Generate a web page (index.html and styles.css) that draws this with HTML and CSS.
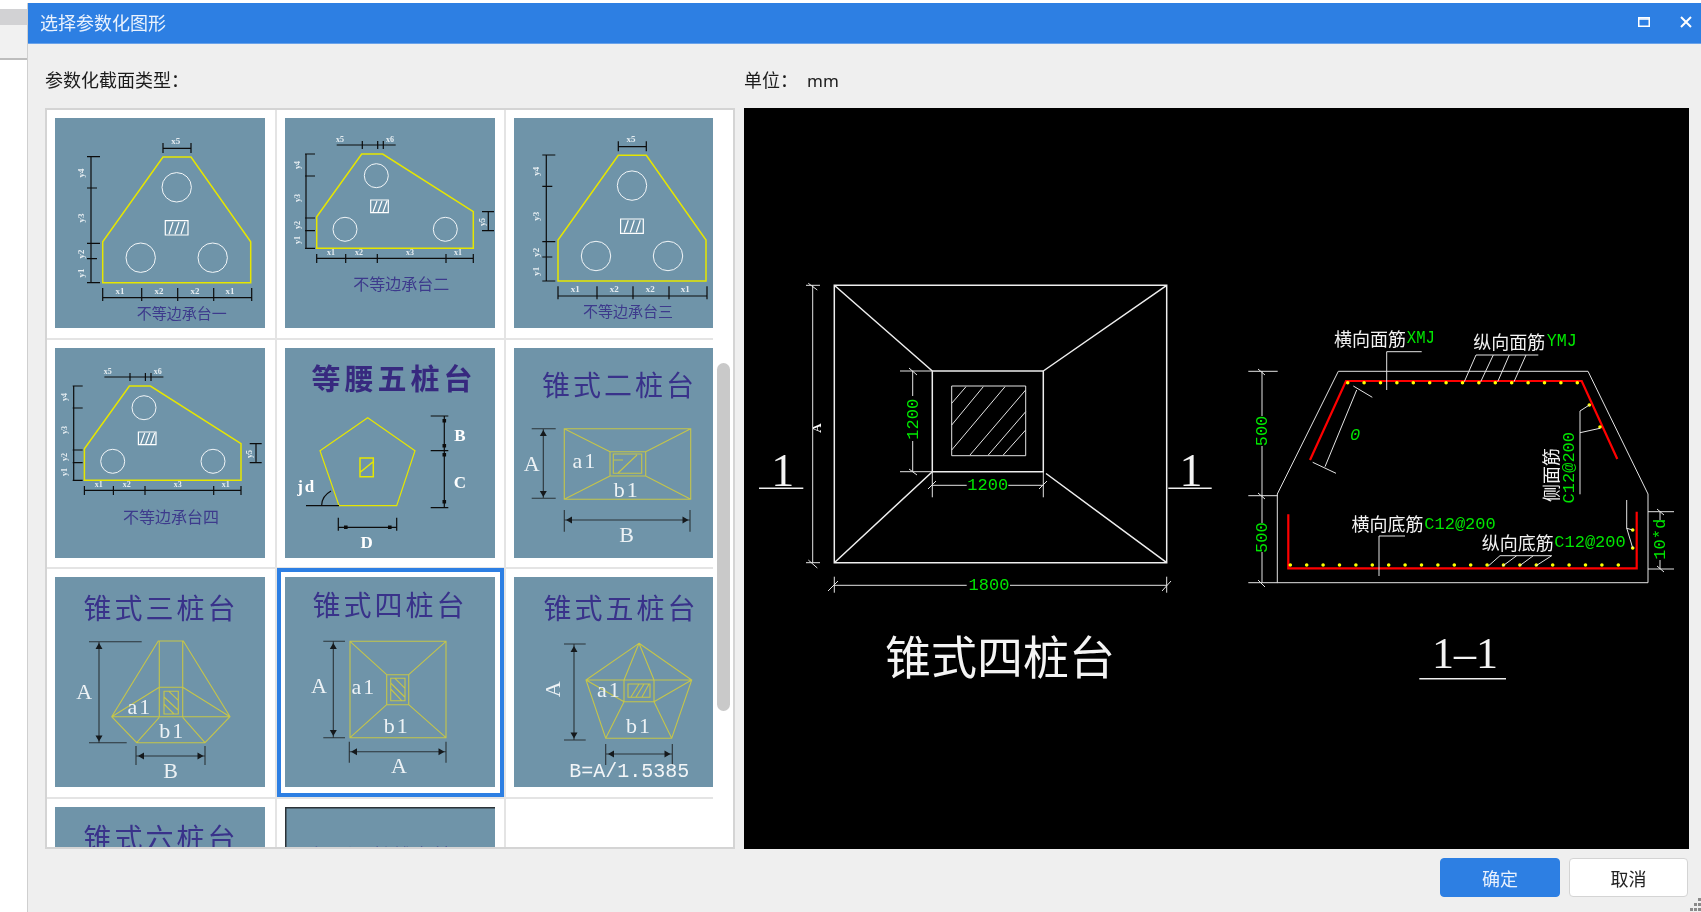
FILE: index.html
```html
<!DOCTYPE html>
<html lang="zh">
<head>
<meta charset="utf-8">
<title>选择参数化图形</title>
<link rel="stylesheet" href="styles.css">
</head>
<body>
<div class="page">
  <aside class="strip"><div class="strip-a"></div><div class="strip-b"></div></aside>
  <section class="dialog">
    <header class="titlebar">
      <span class="title">选择参数化图形</span>
      <span class="winbtns">
        <svg class="icon" viewBox="0 0 12 10" width="12" height="10"><path class="win" d="M.75 .75h10.5v8.5H.75z"/><path class="win" d="M.5 2h11"/></svg>
        <svg class="icon" viewBox="0 0 12 12" width="12" height="12"><path class="win2" d="M1 1l10 10M11 1L1 11"/></svg>
      </span>
    </header>
    <div class="labels">
      <span class="lab-left">参数化截面类型：</span>
      <span class="lab-right">单位：<span class="unit">mm</span></span>
    </div>
    <div class="main">
      <div class="list">
        <div class="grid">
          <div class="cell">
            <svg class="thumb" viewBox="0 0 210 210">
              <g id="tA">
                <path class="y" d="M108 39H136L195.7 123.7V164.7H47.7V123.7Z"/>
                <circle class="c" cx="121.7" cy="69.3" r="14.7"/><circle class="c" cx="85.7" cy="139.7" r="14.7"/><circle class="c" cx="157.7" cy="139.7" r="14.7"/>
                <path class="h" d="M110.3 102.7h22.7V117h-22.7zM114 116l4-12M120 116l4-12M126 116l4-12"/>
                <path class="k" d="M108 25v10M136 25v10M108 30.3h28M36 39v125.7M32 38.7h13M32 70h10M32 125.3h13M32 140.7h10M32 164.7h13M47.7 170v13M86.7 170v13M122.7 170v13M158.7 170v13M196.7 170v13M47.7 179.7h149"/>
                <text class="s" x="120.7" y="23">x5</text>
                <text class="s" x="65" y="173">x1</text><text class="s" x="104" y="173">x2</text><text class="s" x="140" y="173">x2</text><text class="s" x="175" y="173">x1</text>
                <text class="s" transform="rotate(-90 26 55)" x="26" y="55">y4</text>
                <text class="s" transform="rotate(-90 26 100)" x="26" y="100">y3</text>
                <text class="s" transform="rotate(-90 26 136)" x="26" y="136">y2</text>
                <text class="s" transform="rotate(-90 26 155)" x="26" y="155">y1</text>
              </g>
              <text class="cap" x="126.7" y="194">不等边承台一</text>
            </svg>
          </div>
          <div class="cell">
            <svg class="thumb" viewBox="0 0 210 210">
              <g id="tB">
                <path class="y" d="M76.7 36H97.7L188.3 93.7V130.3H31.7V98.7Z"/>
                <circle class="c" cx="91.3" cy="57.7" r="12"/><circle class="c" cx="60" cy="111.3" r="12"/><circle class="c" cx="160.3" cy="111.3" r="12"/>
                <path class="h" d="M85.7 82h17.6v12.7H85.7zM88 94l4-11M93 94l4-11M98 94l4-11"/>
                <path class="k" d="M51.7 27h59M77.3 23v8M92.7 23v8M98.3 23v8M21 36v94.3M20 36h10M20 58h10M20 100h10M20 112.7h10M20 130.3h10M31.7 136v9M60.7 136v9M92.3 136v9M161 136v9M188.3 136v9M31.7 140.3h156.6M203.3 93.7v19M197 93.7h12M197 112.7h12"/>
                <text class="xs" x="55" y="21">x5</text><text class="xs" x="105" y="21">x6</text>
                <text class="xs" x="46" y="134">x1</text><text class="xs" x="74" y="134">x2</text><text class="xs" x="125" y="134">x3</text><text class="xs" x="173" y="134">x1</text>
                <text class="xs" transform="rotate(-90 12 47)" x="12" y="47">y4</text>
                <text class="xs" transform="rotate(-90 12 80)" x="12" y="80">y3</text>
                <text class="xs" transform="rotate(-90 12 107)" x="12" y="107">y2</text>
                <text class="xs" transform="rotate(-90 12 122)" x="12" y="122">y1</text>
                <text class="xs" transform="rotate(-90 197 104)" x="197" y="104">y5</text>
              </g>
              <text class="cap cap-l" x="116.2" y="165">不等边承台二</text>
            </svg>
          </div>
          <div class="cell cell-last">
            <svg class="thumb" viewBox="0 0 210 210">
              <use href="#tA" transform="translate(-3.7 -1.7)"/>
              <text class="cap" x="114" y="192.5">不等边承台三</text>
            </svg>
          </div>

          <div class="cell">
            <svg class="thumb" viewBox="0 0 210 210">
              <use href="#tB" transform="translate(-2.3 2)"/>
              <text class="cap cap-l" x="116" y="168">不等边承台四</text>
            </svg>
          </div>
          <div class="cell">
            <svg class="thumb" viewBox="0 0 210 210">
              <text class="ttl ttl-b" x="109" y="29.3">等腰五桩台</text>
              <path class="y1" d="M82.7 69.7L130 102.7L111.7 157.7H54L35 102.7Z"/>
              <path class="y" d="M75 110h13.3v18.7H75zM75.5 124l12.3-10"/>
              <path class="k" d="M145.7 68h17.6M145.7 102.7h17.6M145.7 159.7h17.6M159.3 68v91.7M53.3 169.7v13M111.7 169.7v13M53.3 179.3h58.4M21 157.7h33M36.7 157Q37 148 46 143"/>
              <path class="fk" d="M157.5 71h3.6v3.6h-3.6zM157.5 96h3.6v3.6h-3.6zM157.5 105h3.6v3.6h-3.6zM157.5 152h3.6v3.6h-3.6zM59 177.5h3.6v3.6H59zM103 177.5h3.6v3.6H103z"/>
              <text class="l l-b" x="175" y="87">B</text><text class="l l-b" x="175" y="134.7">C</text><text class="l l-b" x="81.7" y="194.3">D</text><text class="l l-b l-sp" x="21.7" y="138.7">jd</text>
            </svg>
          </div>
          <div class="cell cell-last">
            <svg class="thumb" viewBox="0 0 210 210">
              <text class="ttl" x="105.5" y="36">锥式二桩台</text>
              <path class="o" d="M50.3 80.7H176.7V151.3H50.3ZM96 103.7h35.7V128H96ZM99.3 106h28.4v19.3H99.3ZM50.3 80.7L96 103.7M176.7 80.7L131.7 103.7M50.3 151.3L96 128M176.7 151.3L131.7 128M104 125l19-18M100 112h9"/>
              <path class="d" d="M17.7 80.7h24M17.7 150.3h24M29.3 80.7v69.6M50.3 162v21.7M176 162v21.7M50.3 172H176"/>
              <path class="ar" d="M29.3 82l-3.5 6h7ZM29.3 149l-3.5-6h7ZM52 172l6-3.5v7ZM174.5 172l-6-3.5v7Z"/>
              <text class="l" x="17.7" y="115.3">A</text><text class="l l-sp" x="71" y="112.7">a1</text><text class="l l-sp" x="112.7" y="141.3">b1</text><text class="l" x="112.7" y="186">B</text>
            </svg>
          </div>

          <div class="cell">
            <svg class="thumb" viewBox="0 0 210 210">
              <text class="ttl" x="106" y="30.3">锥式三桩台</text>
              <path class="o" d="M103.3 64H128.3L175 139.7L150 165.7H81.7L56.7 139.7ZM104.3 64V140.3M127.7 64V140.3M104.3 110.3h23.4M56.7 139.7H175M56.7 139.7L104.3 110.3M175 139.7L127.7 110.3M81.7 165.7L104.3 140.3M150 165.7L127.7 140.3M109 114.3h14.3V137H109ZM109 120l14 13M109 127l10 10M114 114.3l9.3 9"/>
              <path class="d" d="M34 64.7h52.7M34 165.7h37.7M44 64.7V165.7M81 169v19M150 169v19M81 179h69"/>
              <path class="ar" d="M44 66l-3.5 6h7ZM44 164.5l-3.5-6h7ZM83 179l6-3.5v7ZM148.5 179l-6-3.5v7Z"/>
              <text class="l" x="29.3" y="114.7">A</text><text class="l l-sp" x="85" y="129.7">a1</text><text class="l l-sp" x="117.3" y="153.7">b1</text><text class="l" x="115.7" y="193.7">B</text>
            </svg>
          </div>
          <div class="cell cell-sel">
            <svg class="thumb" viewBox="0 0 210 210">
              <text class="ttl" x="105" y="27">锥式四桩台</text>
              <path class="o" d="M65 64.3H161V160.7H65ZM101.7 97.7h22V127.7h-22ZM105.7 101.3H120V123.7H105.7ZM65 64.3L101.7 97.7M161 64.3L123.7 97.7M65 160.7L101.7 127.7M161 160.7L123.7 127.7M105.7 106l14 14M105.7 112l11 11.7M110 101.3l10 10"/>
              <path class="d" d="M38.3 64.3H60M38.3 160.7H60M48.3 64.3V160.7M64.3 164.7v21M161 164.7v21M64.3 174.7H161"/>
              <path class="ar" d="M48.3 66l-3.5 6h7ZM48.3 159l-3.5-6h7ZM66 174.7l6-3.5v7ZM159.5 174.7l-6-3.5v7Z"/>
              <text class="l" x="34" y="108">A</text><text class="l l-sp" x="79" y="109">a1</text><text class="l l-sp" x="111.7" y="148">b1</text><text class="l" x="114" y="188.7">A</text>
            </svg>
          </div>
          <div class="cell cell-last">
            <svg class="thumb" viewBox="0 0 210 210">
              <text class="ttl" x="107" y="30.3">锥式五桩台</text>
              <path class="o" d="M125 66.3L177.7 103L157.7 161.3H91.7L72 103ZM110 103h30v21.7h-30ZM114 107h22v13.3h-22ZM125 66.3L110 103M125 66.3L140 103M72 103H177.7M72 103L110 124.7M177.7 103L140 124.7M91.7 161.3L110 124.7M157.7 161.3L140 124.7M117 120l8-13M122 120l8-13M128 120l7-13"/>
              <path class="d" d="M50 67h21.7M50 163h21.7M60 67V163M91.7 167v21M158.3 167v21M91.7 177h66.6"/>
              <path class="ar" d="M60 69l-3.5 6h7ZM60 161.5l-3.5-6h7ZM94 177l6-3.5v7ZM156.5 177l-6-3.5v7Z"/>
              <text class="l" transform="rotate(-90 38.3 112.3)" x="38.3" y="112.3">A</text><text class="l l-sp" x="95.3" y="112.3">a1</text><text class="l l-sp" x="125" y="148">b1</text>
              <text class="m" x="115.3" y="194.3">B=A/1.5385</text>
            </svg>
          </div>

          <div class="cell">
            <svg class="thumb" viewBox="0 0 210 210">
              <text class="ttl" x="106" y="30.3">锥式六桩台</text>
            </svg>
          </div>
          <div class="cell">
            <svg class="thumb" viewBox="0 0 210 210">
              <path class="edge" d="M.75 210V.75H210"/>
              <text class="ttl2" x="108" y="48">矩形四棱锥台桩承</text>
            </svg>
          </div>
          <div class="cell cell-last cell-empty"></div>
        </div>
        <div class="scroll"></div>
      </div>
      <div class="canvas">
        <svg class="draw" viewBox="744 108 945 741">
          <path class="w" d="M834.3 285.3H1166.7V562.7H834.3ZM932.3 371H1043.3V471.7H932.3ZM834.3 285.3L932.3 371M1166.7 285.3L1043.3 371M834.3 562.7L932.3 471.7M1166.7 562.7L1046 473.5"/>
          <path class="w1" d="M951.7 386H1025.7V455.7H951.7ZM951.7 403.3L966 386.7M951.7 425L983.3 386.7M951.7 450L1005 386.7M970 455L1025.7 390M988.3 455L1025.7 411.7M1003.3 455L1025.7 430"/>
          <path class="w1" d="M812.7 285.3V562.7M806 285.3H820M806 562.7H820M808.3 283.3l9 6.7M808.3 560l9 8M900 371H932.3M900 471.7H932.3M912.7 371V396M912.7 441V471.7M909 368l8 7M909 469l8 6M932.3 471.7V497.3M1043.3 471.7V497.3M932.3 485.3H966.7M1008.3 485.3H1043.3M928 489l8-8M1039 489l8-8M834.3 576.7V592.7M1166.7 576.7V592.7M834.3 585.3H966.7M1010 585.3H1166.7M828 591l10-10M1162 591l9-10"/>
          <text class="a" transform="rotate(-90 816 428)" x="816" y="428">A</text>
          <text class="g" transform="rotate(-90 913.3 419.3)" x="913.3" y="419.3">1200</text>
          <text class="g" x="987.7" y="485.3">1200</text>
          <text class="g" x="989" y="585.3">1800</text>
          <text class="big1" x="782.7" y="470">1</text><text class="big1" x="1191" y="470">1</text>
          <path class="w" d="M759 488.3H803.3M1168.3 488.3H1211.7M1419.3 678.7H1506"/>
          <text class="big" x="1000" y="654">锥式四桩台</text>

          <path class="w1" d="M1338.3 371.3H1588L1648 494V582.7H1277.3V494Z"/>
          <path class="red" d="M1310 460L1346 381H1581.7L1617.3 459M1288.3 514.3V568.3H1636.7V511.7"/>
          <path class="dots" d="M1347.7 382.7H1578M1290.3 565H1634"/>
          <path class="dots2" d="M1589.3 405h.01M1600 427h.01M1632.7 530h.01M1632.7 548h.01"/>
          <path class="w1" d="M1421.7 351.7H1386.7V390M1476 355H1538.3M1476 355L1464.3 381.7M1493.3 355L1480.7 381.7M1509.3 355L1497.7 381.7M1526 355L1514 381.7M1248.3 371.3H1277.7M1248.3 495.7H1277.7M1248.3 582.7H1277.7M1262 371.3V416M1262 446V523M1262 552V582.7M1258 369l7 6M1258 493l7 6M1258 580l7 7M1356.7 390L1325 466.7M1353.3 386L1372.3 397.3M1312.7 462.3L1336 473.3M1589.3 405L1580 411V494.3M1580 432.7L1600 428.3M1405 536H1379V576M1500 555.7H1551.7M1500 555.7L1488.3 566M1516.7 555.7L1502.7 566M1533.3 555.7L1519.3 566M1551.7 555.7L1535.7 566M1626.7 500V528.3L1632.7 530M1626.7 528L1632.7 548M1648 511.7H1674M1648 569H1674M1660 511.7V520M1660 560V569M1657 509l7 6M1657 566l7 6"/>
          <text class="zh" x="1370" y="338">横向面筋</text>
          <text class="g g-n" x="1420.8" y="338" textLength="28" lengthAdjust="spacingAndGlyphs">XMJ</text>
          <text class="zh" x="1509.2" y="341">纵向面筋</text>
          <text class="g g-n" x="1561.7" y="341" textLength="30" lengthAdjust="spacingAndGlyphs">YMJ</text>
          <text class="g" transform="rotate(-90 1262.3 431)" x="1262.3" y="431">500</text>
          <text class="g" transform="rotate(-90 1262.3 537.7)" x="1262.3" y="537.7">500</text>
          <text class="g g-i" x="1355" y="435">0</text>
          <text class="zh" transform="rotate(-90 1550 475)" x="1550" y="475">侧面筋</text>
          <text class="g" transform="rotate(-90 1569.3 467.7)" x="1569.3" y="467.7">C12@200</text>
          <text class="zh" x="1387.5" y="523.3">横向底筋</text>
          <text class="g" x="1460" y="524">C12@200</text>
          <text class="zh" x="1517.8" y="541.7">纵向底筋</text>
          <text class="g" x="1590" y="542">C12@200</text>
          <text class="g" transform="rotate(-90 1660.7 539.3)" x="1660.7" y="539.3">10*d</text>
          <text class="big2" x="1465" y="653">1–1</text>
        </svg>
      </div>
    </div>
    <footer class="footer">
      <button class="btn btn-ok" type="button">确定</button>
      <button class="btn btn-no" type="button">取消</button>
    </footer>
    <svg class="grip" viewBox="0 0 12 14" width="12" height="14"><path class="gripdots" d="M9 0h3v3H9zM5 5h3v3H5zM9 5h3v3H9zM1 10h3v3H1zM5 10h3v3H5zM9 10h3v3H9z"/></svg>
  </section>
</div>
</body>
</html>
```
FILE: styles.css
```css
html, body { margin: 0; padding: 0; background: #fff; }
body { font-family: "Noto Sans CJK SC", "Noto Sans", sans-serif; overflow: hidden; }
.page { display: flex; width: 1701px; height: 912px; overflow: hidden; filter: blur(.35px); }
.strip { width: 27px; flex: none; padding-top: 9px; }
.strip-a { height: 16px; background: #d2d2d4; }
.strip-b { height: 33px; background: #f1f1f1; border-bottom: 2px solid #bdbdbd; }

.dialog { position: relative; flex: 1; margin-top: 3px; display: flex; flex-direction: column; background: #efefef; border-left: 1px solid #cfcfcf; min-width: 0; }
.titlebar { height: 41px; flex: none; box-sizing: border-box; display: flex; align-items: center; justify-content: space-between; padding: 0 9px 2px 12px; background: #2d7fe3; border-bottom: 1px solid #6aa3ea; color: #fff; }
.title { font-size: 18px; color: #eaf2fd; }
.winbtns { display: flex; align-items: center; gap: 30px; }
.icon { display: block; }
.win { fill: none; stroke: #fff; stroke-width: 1.5; }
.win2 { fill: none; stroke: #fff; stroke-width: 2; }

.labels { height: 64px; flex: none; box-sizing: border-box; padding: 22px 0 0 17px; display: flex; font-size: 18px; line-height: 26px; color: #1c1c1c; }
.lab-left { width: 699px; flex: none; }
.unit { font-family: "Noto Sans", sans-serif; font-size: 17px; margin-left: 9px; }

.main { display: flex; flex: none; height: 741px; padding-left: 17px; gap: 9px; }
.list { position: relative; box-sizing: border-box; width: 690px; height: 741px; flex: none; overflow: hidden; background: #fff; border: 2px solid #d4d4d4; }
.grid { display: grid; grid-template-columns: 229.5px 229.5px 206.5px; grid-auto-rows: 229.5px; }
.cell { position: relative; box-sizing: border-box; padding: 8px 0 0 8px; border-right: 2px solid #e4e4e4; border-bottom: 2px solid #e4e4e4; overflow: hidden; }
.cell-last { border-right: 0; }
.cell-empty { border-bottom: 0; }
.cell-sel { overflow: visible; }
.cell-sel::before { content: ""; position: absolute; top: -1px; right: .5px; bottom: 0; left: 0; border: 4px solid #2d7fe3; }
.thumb { display: block; width: 210px; height: 210px; background: #6f94a9; }
.scroll { position: absolute; top: 253px; right: 3px; width: 13px; height: 348px; border-radius: 7px; background: #c9c9c9; }

.canvas { width: 945px; height: 741px; flex: none; background: #000; }
.draw { display: block; width: 945px; height: 741px; }

.footer { flex: none; display: flex; justify-content: flex-end; gap: 9px; padding: 9px 13px 0 0; }
.btn { box-sizing: border-box; width: 120px; height: 39px; padding: 0; font: 18px "Noto Sans CJK SC", sans-serif; border-radius: 4px; }
.btn-ok { background: #2d7fe3; border: 1px solid #2d7fe3; color: #e8f1fd; }
.btn-no { width: 119px; background: #fff; border: 1px solid #d4d4d4; color: #222; }
.grip { position: absolute; right: 0; bottom: 0; }
.gripdots { fill: #8a8a8a; }

/* thumbnails */
text { text-anchor: middle; dominant-baseline: central; }
.y { fill: none; stroke: #e6e600; stroke-width: 1.5; }
.y1 { fill: none; stroke: #e6e600; stroke-width: 1.2; }
.c { fill: none; stroke: #f2f6f8; stroke-width: 1; }
.h { fill: none; stroke: #fff; stroke-width: 1.2; }
.k { fill: none; stroke: #0c0c0c; stroke-width: 1.2; }
.fk { fill: #0c0c0c; }
.o { fill: none; stroke: #c5c54a; stroke-width: 1.1; }
.d { fill: none; stroke: #2b3338; stroke-width: 1.1; }
.ar { fill: #15191c; }
.edge { fill: none; stroke: #2c3338; stroke-width: 1.5; }
.s { font: 9px "Liberation Serif", serif; font-weight: 700; fill: #e6edf1; }
.xs { font: 8px "Liberation Serif", serif; font-weight: 700; fill: #e6edf1; }
.cap { font: 15px "Noto Sans CJK SC", sans-serif; fill: #3d3a8c; }
.cap-l { font-size: 16px; }
.ttl { font: 28px "Noto Sans CJK SC", sans-serif; letter-spacing: 3px; fill: #39328a; }
.ttl-b { font-weight: 700; font-size: 29px; letter-spacing: 4px; fill: #37297f; }
.ttl2 { font: 20px "Noto Sans CJK SC", sans-serif; fill: #3d3a8c; }
.l { font: 22px "Liberation Serif", serif; fill: #edf2f5; }
.l-sp { letter-spacing: 2px; }
.l-b { font-size: 17px; font-weight: 700; fill: #fff; }
.m { font: 20px "Liberation Mono", monospace; fill: #f2f5f7; }

/* main drawing */
.w { fill: none; stroke: #eee; stroke-width: 1.5; }
.w1 { fill: none; stroke: #e4e4e4; stroke-width: 1; }
.red { fill: none; stroke: #f00; stroke-width: 2.2; }
.dots { fill: none; stroke: #ff0; stroke-width: 3.6; stroke-linecap: round; stroke-dasharray: 0 16.4; }
.dots2 { fill: none; stroke: #ff0; stroke-width: 3.6; stroke-linecap: round; }
.g { font: 17px "Liberation Mono", monospace; fill: #00e600; }
.g-n { font-size: 18px; }
.g-i { font-style: italic; }
.a { font: 13px "Liberation Serif", serif; font-weight: 700; fill: #fff; }
.zh { font: 18px "Noto Sans CJK SC", sans-serif; fill: #f2f2f2; }
.big { font: 46px "Noto Sans CJK SC", sans-serif; fill: #f4f4f4; font-weight: 400; }
.big1 { font: 46px "Liberation Serif", serif; fill: #f4f4f4; }
.big2 { font: 44px "Liberation Serif", serif; fill: #f4f4f4; }
```
